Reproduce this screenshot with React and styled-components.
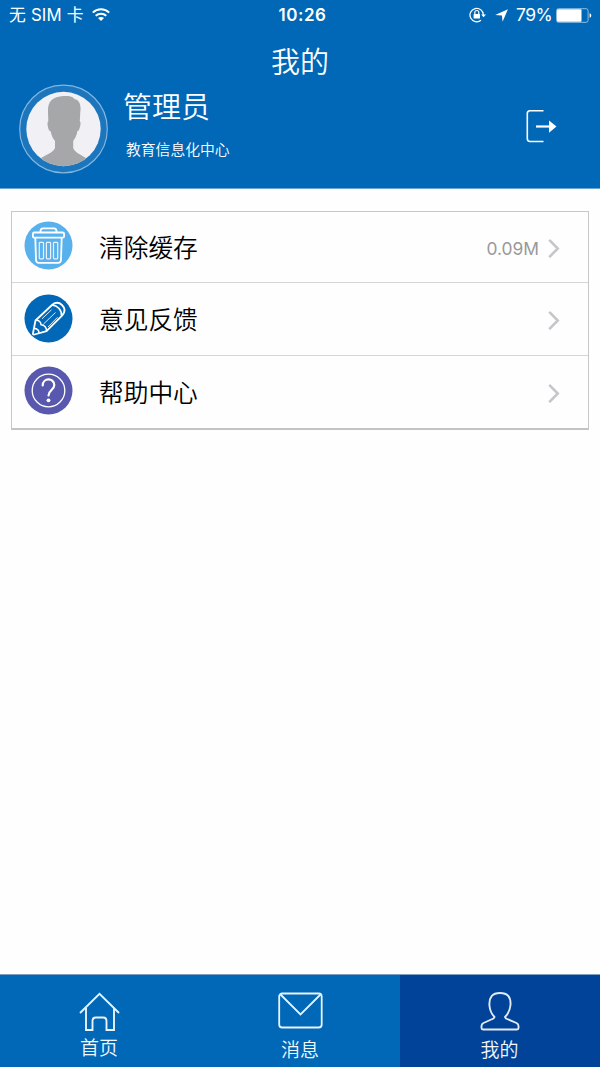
import styled, { createGlobalStyle } from 'styled-components';

const GlobalStyle = createGlobalStyle`
  * {
    box-sizing: border-box;
  }

  body {
    margin: 0;
    background: #fefefe;
    font-family: Inter, 'Noto Sans CJK SC', sans-serif;
  }

  svg {
    display: block;
    flex-shrink: 0;
  }
`;

const Screen = styled.div`
  display: flex;
  flex-direction: column;
  width: 600px;
  height: 1067px;
`;

const Header = styled.header`
  height: 189px;
  background: #0068b7;
  border-bottom: 1px solid #6ba6d6;
  color: white;
`;

const StatusBar = styled.div`
  display: grid;
  grid-template-columns: 1fr auto 1fr;
  align-items: center;
  height: 30px;
  padding: 0 8px 0 9px;
  font-size: 16.8px;
  font-weight: 390;
  line-height: 30px;
  white-space: nowrap;
`;

const Carrier = styled.div`
  display: flex;
  align-items: center;
  gap: 8px;
  letter-spacing: 0.2px;
`;

const Clock = styled.div`
  padding-left: 4px;
  font-size: 17px;
  font-weight: 600;
  letter-spacing: 0.5px;
`;

const Indicators = styled.div`
  display: flex;
  align-items: center;
  justify-content: flex-end;
`;

const Battery = styled.span`
  margin: 0 4px 0 8px;
  font-size: 17.5px;
  letter-spacing: -0.6px;
`;

const Title = styled.h1`
  margin: 0;
  height: 54px;
  font-size: 29px;
  font-weight: 350;
  line-height: 65px;
  text-align: center;
`;

const Profile = styled.div`
  display: flex;
  padding: 0 43px 0 19px;
`;

const UserInfo = styled.div`
  flex: 1;
  margin-left: 15px;
`;

const UserName = styled.div`
  height: 47px;
  font-size: 29px;
  font-weight: 350;
  line-height: 47px;
`;

const Department = styled.div`
  padding-left: 3px;
  font-size: 14.8px;
  font-weight: 350;
  line-height: 38px;
`;

const LogoutButton = styled.button`
  height: 34px;
  margin-top: 25px;
  padding: 0;
  border: none;
  background: none;
`;

const Menu = styled.main`
  margin: 22px 11px 0;
  border: 1px solid #c8c8ca;
  border-bottom: 2px solid #c4c4c6;
`;

const MenuRow = styled.div`
  display: flex;
  align-items: center;
  height: ${(props) => props.$height}px;
  padding: 0 28px 0 12px;
  border-bottom: ${(props) => (props.$last ? 'none' : '1px solid #d5d5d7')};
`;

const IconCircle = styled.div`
  width: 49px;
  height: 49px;
  margin-bottom: ${(props) => props.$lift}px;
`;

const MenuLabel = styled.div`
  flex: 1;
  margin-left: 26px;
  padding-top: 2px;
  color: #000;
  font-size: 24.7px;
  font-weight: 350;
  line-height: 36px;
`;

const MenuValue = styled.div`
  margin-right: 9px;
  padding-top: 2px;
  color: #98989a;
  font-size: 17.4px;
  font-weight: 400;
`;

const TabBar = styled.nav`
  display: grid;
  grid-template-columns: repeat(3, 1fr);
  height: 93px;
  margin-top: auto;
  border-top: 1px solid #7f9fc6;
`;

const Tab = styled.div`
  display: flex;
  flex-direction: column;
  align-items: center;
  padding: 17px ${(props) => props.$shift || 0}px 0 0;
  background: ${(props) => (props.$active ? '#004398' : '#0068b7')};
  color: #f2f7fc;
`;

const TabLabel = styled.div`
  margin-top: ${(props) => props.$gap}px;
  font-size: 19px;
  font-weight: 350;
  line-height: 28px;
`;

function WifiIcon() {
  return (
    <svg width="18" height="14" viewBox="0 0 18 14" fill="none" stroke="#fff" strokeWidth="2">
      <path d="M0.8 4.6C5.4 0.2 12.6 0.2 17.2 4.6" />
      <path d="M3.7 7.8C6.8 4.9 11.2 4.9 14.3 7.8" />
      <path d="M9 13L6 10.1C7.7 8.6 10.3 8.6 12 10.1Z" fill="#fff" stroke="none" />
    </svg>
  );
}

function LockIcon() {
  return (
    <svg width="18" height="16" viewBox="0 0 18 16" fill="none" stroke="#fff" strokeWidth="1.2">
      <path d="M14.4 8A6.7 6.7 0 1 0 12 13.2" />
      <path d="M12.2 7.4H17L14.6 10.2Z" fill="#fff" stroke="none" />
      <rect x="4.6" y="7" width="6.4" height="4.6" rx="0.5" fill="#fff" stroke="none" />
      <path d="M5.8 7.2V5.5A2 2 0 0 1 9.8 5.5V7.2" />
    </svg>
  );
}

const LocationSvg = styled.svg`
  margin-left: 8px;
`;

function LocationIcon() {
  return (
    <LocationSvg width="13" height="13" viewBox="0 0 13 13" fill="#fff">
      <path d="M12.9 0.2L7.6 12.8L6.9 6.4L0.2 6Z" />
    </LocationSvg>
  );
}

function BatteryIcon() {
  return (
    <svg width="36" height="15" viewBox="0 0 36 15" fill="none">
      <rect x="0.5" y="0.7" width="31.6" height="13.6" rx="2" stroke="#8fbde0" />
      <rect x="1" y="1.2" width="24.5" height="12.6" rx="1" fill="#fff" />
      <path d="M33.6 5.2C35.8 5.6 35.8 9.4 33.6 9.8Z" fill="#fff" />
    </svg>
  );
}

function Avatar() {
  return (
    <svg width="89" height="90" viewBox="0 0 89 90">
      <defs>
        <clipPath id="face">
          <circle cx="44.5" cy="45" r="37.2" />
        </clipPath>
      </defs>
      <circle cx="44.5" cy="45" r="43.8" fill="#1b76be" stroke="#83b6df" strokeWidth="1.2" />
      <circle cx="44.5" cy="45" r="37.2" fill="#f0f0f5" />
      <path
        clipPath="url(#face)"
        fill="#a6a7a9"
        d="M44.5 12C52 11.5 54 13 55.5 15C60.5 16 62.3 21 61.3 28L60.8 37.5C62.2 38 61.5 42 60 46C59.5 47 58.7 46.5 58.5 47C57.5 52 56 54.5 54.2 57V64C56 69 63 71 70 76L75 90H14L19 76C26 71 34 69 36 64V57C33.8 54.5 32.5 51.5 31.5 47C30.5 47 30 46.5 29.5 45C28.5 41.5 28 38 29.3 37.5L29 28C28.5 18 33 12.5 44.5 12Z"
      />
    </svg>
  );
}

function LogoutIcon() {
  return (
    <svg width="31" height="34" viewBox="0 0 31 34" fill="none" stroke="#fff" strokeWidth="1.6">
      <path d="M17.5 1.8H4Q1.3 1.8 1.3 4.5V29.5Q1.3 32.5 4 32.5H17.5" />
      <path d="M10 17.5H23" strokeWidth="2.2" />
      <path d="M23 11.5L30.5 17.5L23 23.8Z" fill="#fff" stroke="none" />
    </svg>
  );
}

function TrashIcon() {
  return (
    <svg width="49" height="49" viewBox="0 0 49 49" fill="none" stroke="#fff" strokeLinejoin="round">
      <circle cx="24.5" cy="24.5" r="24" fill="#58b0ec" stroke="none" />
      <path d="M16.5 11.5V10Q16.5 7.3 19 7.3H30Q32.5 7.3 32.5 10V11.5" strokeWidth="1.8" />
      <rect x="8.9" y="11.5" width="31.2" height="5.2" rx="1.5" strokeWidth="1.8" />
      <path d="M11.3 17L12 39Q12.2 41.8 14.8 41.8H34.2Q36.8 41.8 37 39L37.7 17" strokeWidth="1.8" />
      <g strokeWidth="1.2" strokeOpacity="0.85">
        <rect x="15.3" y="21.3" width="4.2" height="16.6" rx="0.8" />
        <rect x="22.4" y="21.3" width="4.2" height="16.6" rx="0.8" />
        <rect x="29.5" y="21.3" width="4.2" height="16.6" rx="0.8" />
      </g>
    </svg>
  );
}

function PencilIcon() {
  return (
    <svg width="49" height="49" viewBox="0 0 49 49" fill="none" stroke="#fff" strokeLinejoin="round">
      <circle cx="24.5" cy="24.5" r="24" fill="#0068b7" stroke="none" />
      <path
        d="M9 39L11.5 26.5L28 11C31 8.5 34.5 7.7 38 11C41 14 41.2 18 38.3 21.3L22.5 37.2L10.5 40.5Q8.5 41 9 39Z"
        strokeWidth="1.8"
      />
      <path d="M28 11.3C33 11 38 16 37.5 21.8" strokeWidth="1.6" />
      <path d="M11.5 26.5C14 25.7 17 27.5 17 30.8C20.5 31 22.8 33.5 22.5 37.2M10 34.2C13 34.5 15 36.500 15 39" strokeWidth="1.5" />
      <path d="M18 24.8L27.5 15.8M19.5 30L31.5 18.5M24 33L33.5 23.3" strokeWidth="1" strokeOpacity="0.85" />
    </svg>
  );
}

function HelpIcon() {
  return (
    <svg width="49" height="49" viewBox="0 0 49 49" fill="none" stroke="#fff">
      <circle cx="24.5" cy="24.5" r="24" fill="#5858ae" stroke="none" />
      <circle cx="24.5" cy="24.5" r="16.3" strokeWidth="1.3" />
      <path
        d="M18.7 19.5C18.7 11.5 30.3 11.5 30.3 19C30.3 24 24.5 24 24.5 29.5"
        strokeWidth="2.2"
        strokeLinecap="round"
      />
      <circle cx="24.5" cy="34.3" r="1.9" fill="#fff" stroke="none" />
    </svg>
  );
}

const ChevronSvg = styled.svg`
  margin-top: 1px;
`;

function Chevron() {
  return (
    <ChevronSvg width="12" height="20" viewBox="0 0 12 20" fill="none" stroke="#c5c5ca" strokeWidth="2.5">
      <path d="M1.2 1.8L9.8 10.5L1.2 19.2" />
    </ChevronSvg>
  );
}

function HomeIcon() {
  return (
    <svg width="41" height="40" viewBox="0 0 41 40" fill="none" stroke="#e8f2fa" strokeWidth="1.9">
      <path d="M1 21L20.5 1.8L40 21" />
      <path d="M7 16V38H13.5V29Q13.5 25.5 17 25.5H24Q27.5 25.5 27.5 29V38H35V16" />
    </svg>
  );
}

function MailIcon() {
  return (
    <svg width="45" height="40" viewBox="0 0 45 40" fill="none" stroke="#e8f2fa" strokeWidth="1.8">
      <rect x="1.2" y="1.5" width="42.5" height="34" rx="3" />
      <path d="M2.5 2.5L22.5 22.5L42.5 2.5" />
    </svg>
  );
}

function PersonIcon() {
  return (
    <svg width="40" height="40" viewBox="0 0 40 40" fill="none" stroke="#e3eaf4" strokeWidth="1.9" strokeLinejoin="round">
      <path d="M20 1C12.5 1 8.7 5 9.5 14C10 19 12 22.5 14.5 25L13.5 26.5L3.5 31Q1.5 32 1.5 34V36Q1.5 37.5 3 37.5H37Q38.5 37.5 38.5 36V34Q38.5 32 36.5 31L26 26.5L25 25C28 22 30 18.5 30.5 13C31 4.5 27.5 1 20 1Z" />
    </svg>
  );
}

const menuItems = [
  { label: '清除缓存', value: '0.09M', icon: <TrashIcon />, height: 71, lift: 3 },
  { label: '意见反馈', icon: <PencilIcon />, height: 73, lift: 2 },
  { label: '帮助中心', icon: <HelpIcon />, height: 72, lift: 3 },
];

const tabs = [
  { label: '首页', icon: <HomeIcon />, shift: 2, gap: 3 },
  { label: '消息', icon: <MailIcon />, gap: 5 },
  { label: '我的', icon: <PersonIcon />, shift: 1, gap: 5, active: true },
];

export default function App() {
  return (
    <>
      <GlobalStyle />
      <Screen>
        <Header>
          <StatusBar>
            <Carrier>
              无 SIM 卡
              <WifiIcon />
            </Carrier>
            <Clock>10:26</Clock>
            <Indicators>
              <LockIcon />
              <LocationIcon />
              <Battery>79%</Battery>
              <BatteryIcon />
            </Indicators>
          </StatusBar>
          <Title>我的</Title>
          <Profile>
            <Avatar />
            <UserInfo>
              <UserName>管理员</UserName>
              <Department>教育信息化中心</Department>
            </UserInfo>
            <LogoutButton>
              <LogoutIcon />
            </LogoutButton>
          </Profile>
        </Header>
        <Menu>
          {menuItems.map((item, index) => (
            <MenuRow key={item.label} $height={item.height} $last={index === menuItems.length - 1}>
              <IconCircle $lift={item.lift}>{item.icon}</IconCircle>
              <MenuLabel>{item.label}</MenuLabel>
              {item.value && <MenuValue>{item.value}</MenuValue>}
              <Chevron />
            </MenuRow>
          ))}
        </Menu>
        <TabBar>
          {tabs.map((tab) => (
            <Tab key={tab.label} $active={tab.active} $shift={tab.shift}>
              {tab.icon}
              <TabLabel $gap={tab.gap}>{tab.label}</TabLabel>
            </Tab>
          ))}
        </TabBar>
      </Screen>
    </>
  );
}
